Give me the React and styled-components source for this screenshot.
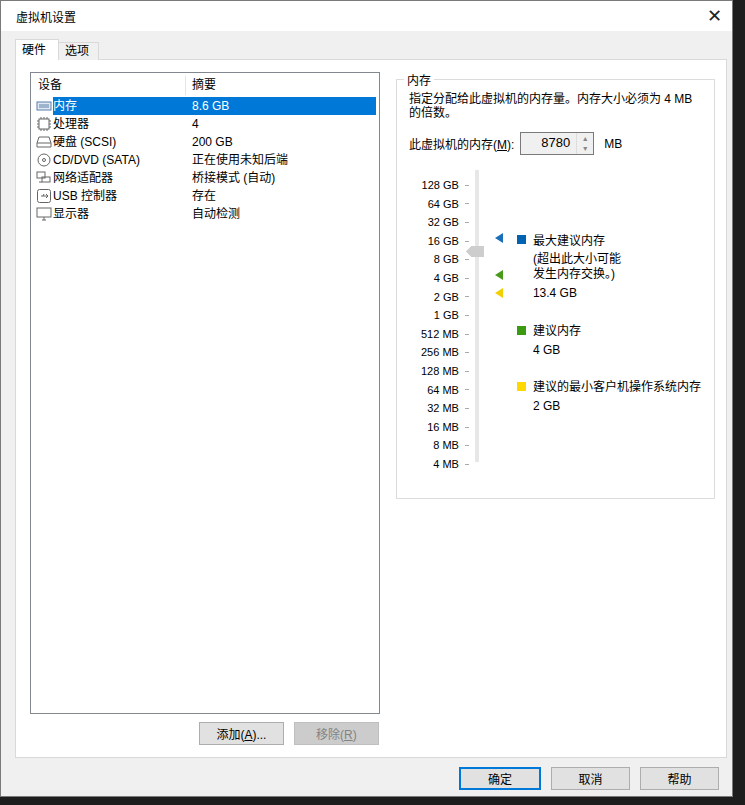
import React from 'react';
import styled, { createGlobalStyle } from 'styled-components';

const Global = createGlobalStyle`
  body { margin: 0; background: #1d1d1d; font-family: "Liberation Sans", "Noto Sans CJK SC", sans-serif; font-size: 12px; color: #000; }
`;

const Dialog = styled.div`
  width: 733px; height: 797px; background: #f0f0f0; border: 1px solid #7a7a7a;
  display: flex; flex-direction: column; box-sizing: border-box;
`;
const TitleBar = styled.div`
  height: 30px; background: #fff; display: flex; align-items: center; justify-content: space-between;
  padding: 0 10px 0 15px; font-size: 12px;
`;
const Close = styled.span` font-size: 18px; color: #222; `;
const Body = styled.div` padding: 9px 5px 0 14px; flex: 1; display: flex; flex-direction: column; `;
const Tabs = styled.div` display: flex; align-items: flex-end; height: 20px; `;
const Tab = styled.div`
  padding: 0 6px; height: ${p => (p.$active ? 20 : 17)}px; line-height: ${p => (p.$active ? 20 : 17)}px;
  background: ${p => (p.$active ? '#fff' : '#f0f0f0')}; border: 1px solid #d9d9d9; border-bottom: none;
  margin-right: -1px; position: relative; z-index: ${p => (p.$active ? 1 : 0)};
  padding-right: ${p => (p.$active ? 12 : 9)}px;
`;
const Panel = styled.div`
  background: #fff; border: 1px solid #d9d9d9; height: 699px; box-sizing: border-box;
  display: flex; padding: 12px 11px 0 14px; gap: 16px; margin-top: -1px;
`;
const LeftCol = styled.div` width: 351px; display: flex; flex-direction: column; `;
const List = styled.div` border: 1px solid #828790; height: 642px; box-sizing: border-box; padding: 3px 1px; `;
const Header = styled.div` display: grid; grid-template-columns: 154px 1fr; height: 19px; align-items: center; margin-bottom: 2px; `;
const HeadCell = styled.div` padding-left: 6px; border-right: ${p => (p.$sep ? '1px solid #e5e5e5' : 'none')}; height: 19px; line-height: 19px; `;
const Row = styled.div` display: grid; grid-template-columns: 154px 1fr; height: 18px; align-items: center; `;
const NameCell = styled.div` display: flex; align-items: center; padding-left: 4px; gap: 1px; `;
const NameText = styled.span`
  background: ${p => (p.$sel ? '#0078d7' : 'transparent')}; color: ${p => (p.$sel ? '#fff' : '#000')};
  flex: 1; height: 18px; line-height: 18px;
`;
const ValCell = styled.div`
  background: ${p => (p.$sel ? '#0078d7' : 'transparent')}; color: ${p => (p.$sel ? '#fff' : '#000')};
  height: 18px; line-height: 18px; padding-left: 6px; margin-right: 2px;
`;
const ListButtons = styled.div` display: flex; justify-content: flex-end; gap: 10px; margin-top: 8px; padding-right: 1px; `;
const Btn = styled.button`
  width: ${p => p.$w || 85}px; height: 23px; font: inherit; font-size: 12px;
  background: ${p => (p.$disabled ? '#cccccc' : '#e1e1e1')}; color: ${p => (p.$disabled ? '#838383' : '#000')};
  border: ${p => (p.$primary ? '2px solid #0078d7' : '1px solid #adadad')};
  ${p => p.$disabled && 'border-color: #bfbfbf;'} padding: 0;
`;
const Group = styled.fieldset`
  width: 320px; height: 428px; box-sizing: border-box; border: 1px solid #dcdcdc; margin: 0; margin-top: -1px;
  padding: 4px 10px 0 12px;
  legend { padding: 0 3px; margin-left: -5px; }
`;
const Desc = styled.div` line-height: 14px; `;
const MemRow = styled.div` display: flex; align-items: center; margin-top: 12px; gap: 6px; `;
const Spin = styled.div` display: flex; width: 74px; height: 23px; border: 1px solid #7a7a7a; background: #f0f0f0; box-sizing: border-box; `;
const SpinVal = styled.div` flex: 1; text-align: right; padding-right: 6px; line-height: 20px; font-size: 13px; `;
const SpinArrows = styled.div` width: 16px; display: flex; flex-direction: column; border-left: 1px solid #ddd; font-size: 7px; color: #888; align-items: center; justify-content: space-around; `;
const Scale = styled.div` display: flex; margin-top: 21px; `;
const Labels = styled.div` width: 50px; display: flex; flex-direction: column; align-items: flex-end; `;
const Label = styled.div` height: 18.6px; line-height: 18.6px; font-size: 11px; white-space: nowrap; `;
const Ticks = styled.div` width: 16px; display: flex; flex-direction: column; align-items: center; `;
const Tick = styled.div` height: 18.6px; display: flex; align-items: center; &::after { content: ''; width: 4px; height: 1px; background: #aaa; } `;
const Track = styled.div` position: relative; width: 4px; margin-top: -6px; height: 292px; background: #e7e7e7; `;
const Thumb = styled.div`
  position: absolute; left: -9px; top: 76px; width: 18px; height: 11px; background: #cdcdcd;
  clip-path: polygon(30% 0, 100% 0, 100% 100%, 30% 100%, 0 50%);
`;
const Arrow = styled.div`
  position: absolute; left: 20px; top: ${p => p.$top}px; width: 0; height: 0;
  border-top: 5px solid transparent; border-bottom: 5px solid transparent; border-right: 8px solid ${p => p.$c};
`;
const Legend = styled.div` margin-left: 38px; padding-top: 55px; display: flex; flex-direction: column; `;
const LegItem = styled.div` display: grid; grid-template-columns: 16px 1fr; margin-bottom: ${p => p.$mb || 0}px; `;
const Swatch = styled.div` width: 9px; height: 9px; background: ${p => p.$c}; margin-top: 4px; `;
const LegLine = styled.div` line-height: ${p => p.$lh || 19}px; `;
const Footer = styled.div` display: flex; justify-content: flex-end; gap: 10px; padding: 9px 8px 0 0; `;

const ic = { width: 16, height: 14, viewBox: '0 0 16 14', fill: 'none', stroke: '#666' };
const icons = {
  mem: <svg {...ic}><rect x="1" y="3" width="14" height="8" fill="#dfe8f3" stroke="#5a7fa8" /><path d="M3 6h10M3 8h10" stroke="#5a7fa8" /></svg>,
  cpu: <svg {...ic}><rect x="3" y="2" width="10" height="10" /><path d="M5 0v2M8 0v2M11 0v2M5 12v2M8 12v2M11 12v2M1 4h2M1 7h2M1 10h2M13 4h2M13 7h2M13 10h2" /></svg>,
  disk: <svg {...ic}><path d="M3 2h10l2 6v4H1V8z M1 8h14" /></svg>,
  cd: <svg {...ic}><circle cx="8" cy="7" r="6" /><circle cx="8" cy="7" r="1.5" /></svg>,
  net: <svg {...ic}><rect x="1" y="1" width="8" height="6" /><rect x="6" y="6" width="8" height="5" /><path d="M3 11h3" /></svg>,
  usb: <svg {...ic}><rect x="1.5" y="0.5" width="13" height="13" rx="2" /><path d="M5 7h7M10 5l2 2-2 2M7 7l1-2" /></svg>,
  disp: <svg {...ic}><rect x="1" y="1" width="14" height="9" /><path d="M6 13h4M8 10v3" /></svg>,
};

const devices = [
  ['mem', '内存', '8.6 GB', true],
  ['cpu', '处理器', '4'],
  ['disk', '硬盘 (SCSI)', '200 GB'],
  ['cd', 'CD/DVD (SATA)', '正在使用未知后端'],
  ['net', '网络适配器', '桥接模式 (自动)'],
  ['usb', 'USB 控制器', '存在'],
  ['disp', '显示器', '自动检测'],
];
const scale = ['128 GB', '64 GB', '32 GB', '16 GB', '8 GB', '4 GB', '2 GB', '1 GB', '512 MB', '256 MB', '128 MB', '64 MB', '32 MB', '16 MB', '8 MB', '4 MB'];

export default function App() {
  return (
    <>
      <Global />
      <Dialog>
        <TitleBar>虚拟机设置<Close>✕</Close></TitleBar>
        <Body>
          <Tabs>
            <Tab $active>硬件</Tab>
            <Tab>选项</Tab>
          </Tabs>
          <Panel>
            <LeftCol>
              <List>
                <Header><HeadCell $sep>设备</HeadCell><HeadCell>摘要</HeadCell></Header>
                {devices.map(([k, n, v, sel]) => (
                  <Row key={n}>
                    <NameCell>{icons[k]}<NameText $sel={sel}>{n}</NameText></NameCell>
                    <ValCell $sel={sel}>{v}</ValCell>
                  </Row>
                ))}
              </List>
              <ListButtons>
                <Btn>添加(<u>A</u>)...</Btn>
                <Btn $disabled>移除(<u>R</u>)</Btn>
              </ListButtons>
            </LeftCol>
            <Group>
              <legend>内存</legend>
              <Desc>指定分配给此虚拟机的内存量。内存大小必须为 4 MB<br />的倍数。</Desc>
              <MemRow>
                <span>此虚拟机的内存(<u>M</u>):</span>
                <Spin><SpinVal>8780</SpinVal><SpinArrows><span>▲</span><span>▼</span></SpinArrows></Spin>
                <span style={{ marginLeft: 4 }}>MB</span>
              </MemRow>
              <Scale>
                <Labels>{scale.map(s => <Label key={s}>{s}</Label>)}</Labels>
                <Ticks>{scale.map(s => <Tick key={s} />)}</Ticks>
                <Track>
                  <Thumb />
                  <Arrow $top={63} $c="#1a6fbb" />
                  <Arrow $top={100} $c="#4a9a1a" />
                  <Arrow $top={118} $c="#f0d000" />
                </Track>
                <Legend>
                  <LegItem $mb={18}>
                    <Swatch $c="#0063b1" />
                    <div>
                      <LegLine $lh={21}>最大建议内存</LegLine>
                      <LegLine $lh={15}>(超出此大小可能</LegLine>
                      <LegLine $lh={15}>发生内存交换。)</LegLine>
                      <LegLine $lh={22}>13.4 GB</LegLine>
                    </div>
                  </LegItem>
                  <LegItem $mb={18}>
                    <Swatch $c="#3c9a12" />
                    <div><LegLine>建议内存</LegLine><LegLine>4 GB</LegLine></div>
                  </LegItem>
                  <LegItem>
                    <Swatch $c="#ffd800" />
                    <div><LegLine>建议的最小客户机操作系统内存</LegLine><LegLine>2 GB</LegLine></div>
                  </LegItem>
                </Legend>
              </Scale>
            </Group>
          </Panel>
          <Footer>
            <Btn $w={82} $primary>确定</Btn>
            <Btn $w={79}>取消</Btn>
            <Btn $w={79}>帮助</Btn>
          </Footer>
        </Body>
      </Dialog>
    </>
  );
}
